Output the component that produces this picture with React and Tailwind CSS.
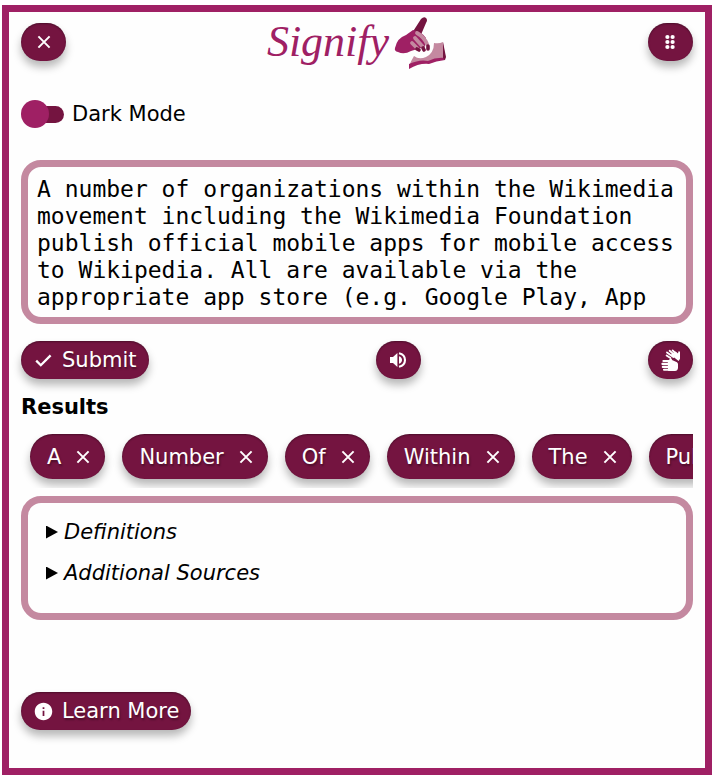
import { MdInfo } from "react-icons/md";

const words = ["A", "Number", "Of", "Within", "The", "Publish"];

const passage =
  "A number of organizations within the Wikimedia movement including the Wikimedia Foundation publish official mobile apps for mobile access to Wikipedia. All are available via the appropriate app store (e.g. Google Play, App";

const surface =
  "flex shrink-0 items-center bg-[#741440] text-white shadow-[0_6px_8px_rgba(0,0,0,0.28),inset_0_1px_2px_rgba(0,0,0,0.35)] text-shadow-[1px_2px_2px_rgba(0,0,0,0.35)]";

function IconButton({ label, children }) {
  return (
    <button type="button" aria-label={label} className={`${surface} h-[38px] w-[45px] justify-center rounded-[20px]`}>
      {children}
    </button>
  );
}

function TextButton({ icon, children }) {
  return (
    <button type="button" className={`${surface} h-[38px] gap-2 rounded-[20px] px-3`}>
      {icon}
      {children}
    </button>
  );
}

function Cross() {
  return (
    <svg width="14" height="14" viewBox="0 0 14 14" fill="none" stroke="currentColor" strokeWidth="2" aria-hidden="true">
      <path d="M1.4 1.4 L12.6 12.6 M12.6 1.4 L1.4 12.6" />
    </svg>
  );
}

function Tick() {
  return (
    <svg width="21" height="21" viewBox="0 0 21 21" fill="none" stroke="currentColor" strokeWidth="2.3" aria-hidden="true">
      <path d="M3.2 10.6 L7.8 15.2 L17.6 5.4" />
    </svg>
  );
}

function GridDots() {
  return (
    <svg width="10" height="16" viewBox="0 0 10 16" fill="currentColor" aria-hidden="true">
      {[3, 8, 13].map((y) => (
        <g key={y}>
          <circle cx="2.4" cy={y} r="2.1" />
          <circle cx="7.6" cy={y} r="2.1" />
        </g>
      ))}
    </svg>
  );
}

function Speaker() {
  return (
    <svg width="18" height="18" viewBox="0 0 18 18" fill="currentColor" aria-hidden="true">
      <path d="M1 6 H4 L8.4 2 V16 L4 12 H1Z" />
      <path d="M10 5.2 Q13 6.2 13 9 Q13 11.8 10 12.8Z" />
      <path d="M10 2.2 Q16 3.6 16 9 Q16 14.4 10 15.8" fill="none" stroke="currentColor" strokeWidth="2.1" />
    </svg>
  );
}

function SigningHands() {
  return (
    <svg width="20" height="22" viewBox="0 0 20 22" fill="currentColor" aria-hidden="true">
      <path d="M10 5 L14.6 2.6 L17 4.6 L17.4 2.6 Q18.4 1.8 19 3 L19 9.8 L17.6 12 L11 6.8Z" />
      <path d="M5.6 6.4 L9.4 9 M6 3.4 L12.4 8 M8.6 1.8 L14 6.4 M11.6 1.4 L15.4 4.8" fill="none" stroke="currentColor" strokeWidth="1.8" strokeLinecap="round" />
      <path d="M6.8 12 L9.4 9.6 Q11 8.8 11 11 L16 13.2 Q17 14 17 15.2 V19 Q16.6 22 14 22 H7.6 Q7 22 7 21Z" />
      <path d="M2.4 12 H8.6 M1.4 14.9 H8.6 M1.8 17.9 H8.6 M3 20.8 H8.6" fill="none" stroke="currentColor" strokeWidth="2.1" strokeLinecap="round" />
    </svg>
  );
}

function HandAndBook() {
  return (
    <svg width="54" height="54" viewBox="0 0 54 54" aria-hidden="true">
      <path d="M21 41 Q26 45 33 42 Q41 38 41 28 Q46 29 50 27 L52 43 L36 46 L16 51 Q18 46 21 41Z" fill="#c489a0" />
      <path d="M16 49 Q27 44 35 46 Q43 42 52 43 L52 45 Q43 46 36 49 Q26 48 16 54Z" fill="#9f2064" />
      <path d="M50 27 L53 42 L52 45 L50 43Z" fill="#741440" />
      <path d="M19 18 L28 4 Q31 1 33 3 Q35 5 33 8 L27 22Z" fill="#741440" />
      <path d="M2 33 Q4 23 13 20 L20 15 Q28 16 33 23 L32 32 Q24 34 18 36 Q11 40 5 37 Q1 36 2 33Z" fill="#9f2064" />
      <g stroke="#c489a0" strokeWidth="3.8" strokeLinecap="round" fill="none">
        <path d="M24 18 Q31 22 34 29" />
        <path d="M22 23 L30 32" />
        <path d="M19 28 L24 33" />
      </g>
      <g stroke="#741440" strokeWidth="3.6" strokeLinecap="round">
        <path d="M35 31 L35 34" />
        <path d="M30 33 L31 35" />
        <path d="M24 34 L26 35" />
      </g>
    </svg>
  );
}

export default function App() {
  return (
    <main className="mt-[5px] mr-1 mb-px ml-0.5 border-[7px] border-[#9f2064] bg-[#fefefe] px-3 pt-[11px] pb-[38px] font-['Verdana','DejaVu_Sans',sans-serif] text-[21px] leading-[26px] text-black">
      <header className="flex h-[38px] items-center justify-between">
        <IconButton label="Close"><Cross /></IconButton>
        <h1 className="flex items-center gap-1 font-['Monotype_Corsiva','Liberation_Serif',serif] text-[44px] leading-[56px] text-[#9f2064] italic">
          Signify
          <HandAndBook />
        </h1>
        <IconButton label="Move"><GridDots /></IconButton>
      </header>

      <label className="mt-[39px] flex w-fit items-center gap-2">
        <input
          type="checkbox"
          role="switch"
          className="grid h-7 w-[43px] appearance-none grid-cols-[28px_15px] items-center before:size-7 before:rounded-full before:bg-[#9f2064] before:content-[''] before:col-start-1 before:row-start-1 before:z-10 after:col-span-2 after:col-start-1 after:row-start-1 after:ml-3 after:h-[17px] after:rounded-[9px] after:bg-[#741440] after:content-['']"
        />
        Dark Mode
      </label>

      <textarea
        aria-label="Text to translate"
        defaultValue={passage}
        className="mt-8 block h-[164px] w-full resize-none overflow-hidden rounded-[20px] border-[7px] border-[#c489a0] bg-transparent p-[9px] font-['DejaVu_Sans_Mono',monospace] text-[23px] leading-[27px]"
      />

      <div className="mt-[17px] flex justify-between">
        <TextButton icon={<Tick />}>Submit</TextButton>
        <IconButton label="Read aloud"><Speaker /></IconButton>
        <IconButton label="Sign"><SigningHands /></IconButton>
      </div>

      <h2 className="mt-[15px] font-bold">Results</h2>
      <ul className="mt-[14px] flex gap-[17px] overflow-hidden pb-[9px] pl-[9px]">
        {words.map((word) => (
          <li key={word} className={`${surface} h-[45px] gap-[15px] rounded-[23px] pr-[15px] pl-[17px]`}>
            {word}
            <button type="button" aria-label={`Remove ${word}`}><Cross /></button>
          </li>
        ))}
      </ul>

      <section className="mt-2 flex h-[124px] flex-col gap-[15px] rounded-[20px] border-[7px] border-[#c489a0] px-[18px] pt-4">
        <details>
          <summary className="flex items-center gap-[6px] italic before:h-[13px] before:w-3 before:bg-black before:content-[''] before:[clip-path:polygon(0_0,100%_50%,0_100%)]">Definitions</summary>
        </details>
        <details>
          <summary className="flex items-center gap-[6px] italic before:h-[13px] before:w-3 before:bg-black before:content-[''] before:[clip-path:polygon(0_0,100%_50%,0_100%)]">Additional Sources</summary>
        </details>
      </section>

      <footer className="mt-[72px] flex">
        <TextButton icon={<MdInfo size={21} />}>Learn More</TextButton>
      </footer>
    </main>
  );
}
